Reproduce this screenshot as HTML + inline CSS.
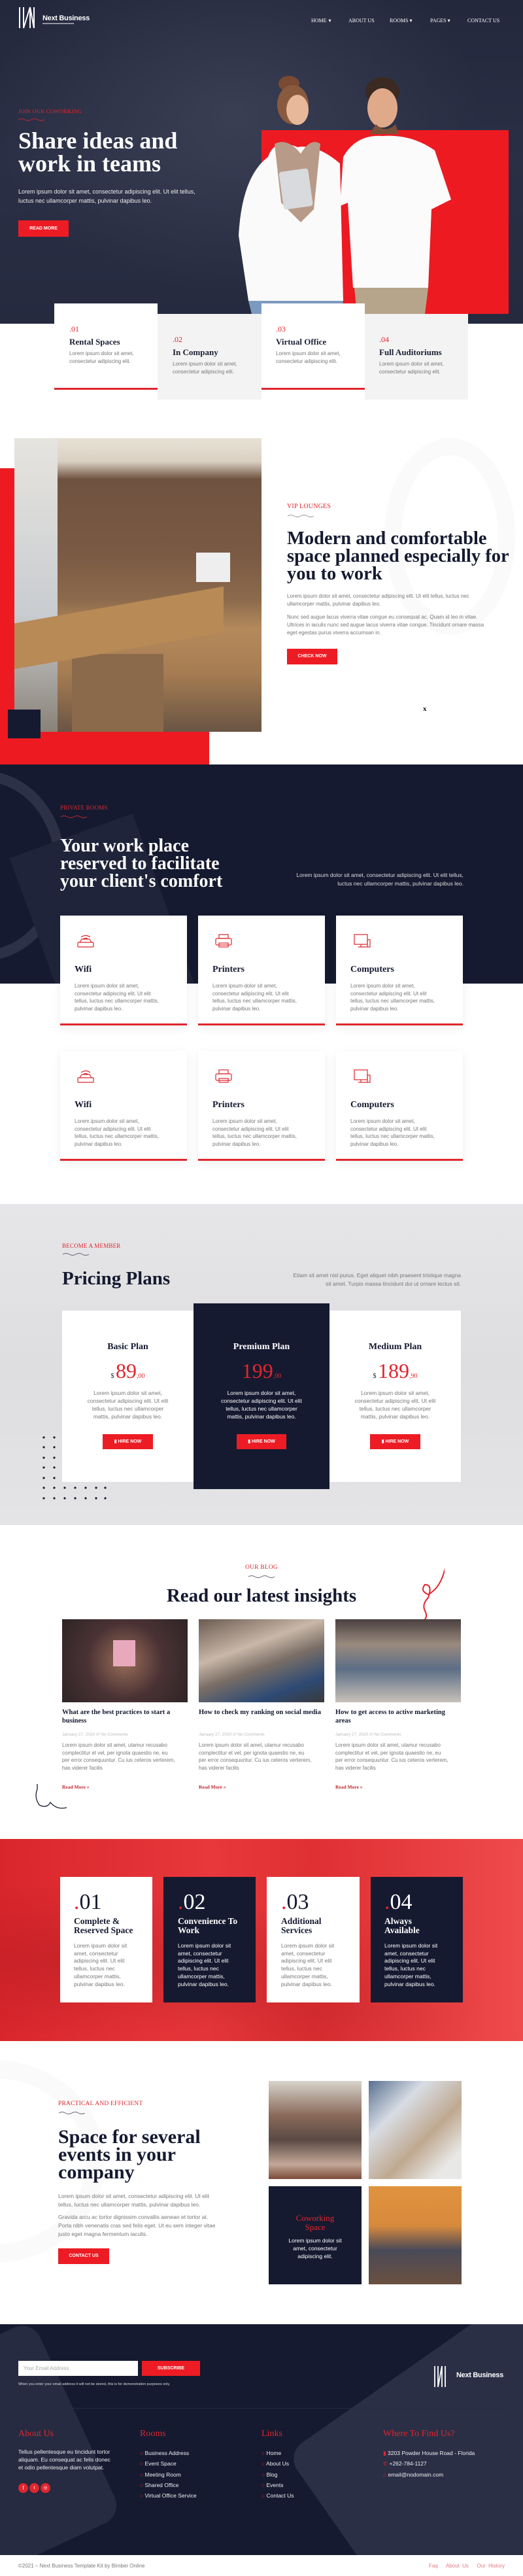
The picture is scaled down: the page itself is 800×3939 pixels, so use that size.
<!DOCTYPE html>
<html><head><meta charset="utf-8"><style>
*{margin:0;padding:0;box-sizing:border-box}
body{width:800px;height:3939px;position:relative;background:#fff;font-family:"Liberation Sans",sans-serif;overflow:hidden}
.a{position:absolute}
.serif{font-family:"Liberation Serif",serif;font-weight:bold}
.tag{font-family:"Liberation Serif",serif;color:#e0262e;font-size:10px;letter-spacing:.2px}
.p{font-size:8.5px;line-height:15px;color:#777}
.btn{background:#ed1c24;color:#fff;font-size:7px;font-weight:bold;text-align:center}
.navy{background:#151a30}
.card{background:#fff;box-shadow:0 4px 14px rgba(0,0,0,.07)}
</style></head><body>

<!-- HERO -->
<div class="a" style="left:0;top:0;width:800px;height:495px;background:linear-gradient(180deg,#23283d 0%,#2a2f45 50%,#252a3f 100%)"></div>
<div class="a" style="left:0;top:0;width:800px;height:495px;background:radial-gradient(ellipse at 45% 35%,rgba(90,95,115,.35),rgba(0,0,0,0) 60%)"></div>
<svg class="a" style="left:28px;top:10px" width="32" height="34" viewBox="0 0 32 34"><g stroke="#fff" stroke-width="2" fill="none"><path d="M2 1V33M8 1V33L18 1V33M24 1V33M18 1L24 33"/></g></svg>
<div class="a" style="left:65px;top:22px;color:#fff;font-size:11px;font-weight:bold;letter-spacing:-.3px">Next Business</div>
<div class="a" style="left:65px;top:35px;width:48px;height:2px;background:rgba(255,255,255,.5)"></div>
<div class="a serif" style="top:27px;left:476px;color:#fff;font-size:8px;font-weight:normal;word-spacing:1px">HOME ▾</div>
<div class="a serif" style="top:27px;left:533px;color:#fff;font-size:8px;font-weight:normal">ABOUT US</div>
<div class="a serif" style="top:27px;left:596px;color:#fff;font-size:8px;font-weight:normal">ROOMS ▾</div>
<div class="a serif" style="top:27px;left:658px;color:#fff;font-size:8px;font-weight:normal">PAGES ▾</div>
<div class="a serif" style="top:27px;left:715px;color:#fff;font-size:8px;font-weight:normal">CONTACT US</div>

<div class="a tag" style="left:28px;top:165px;font-size:8.5px">JOIN OUR COWORKING</div>
<svg class="a" style="left:28px;top:180px" width="40" height="5"><path d="M0 3Q5 0 10 3T20 3T30 3T40 3" stroke="#c0282e" fill="none"/></svg>
<div class="a serif" style="left:28px;top:198px;color:#fff;font-size:36px;line-height:35px">Share ideas and<br>work in teams</div>
<div class="a" style="left:28px;top:286px;color:#eee;font-size:9px;line-height:14px">Lorem ipsum dolor sit amet, consectetur adipiscing elit. Ut elit tellus,<br>luctus nec ullamcorper mattis, pulvinar dapibus leo.</div>
<div class="a btn" style="left:28px;top:337px;width:77px;height:25px;line-height:25px">READ MORE</div>

<div class="a" style="left:400px;top:199px;width:378px;height:281px;background:#ed1a22"></div>
<svg class="a" style="left:360px;top:110px" width="340" height="370" viewBox="0 0 340 370">
<ellipse cx="82" cy="18" rx="16" ry="12" fill="#7a4a32"/>
<ellipse cx="88" cy="50" rx="24" ry="30" fill="#8a5a3e"/>
<ellipse cx="95" cy="58" rx="17" ry="23" fill="#e8b89a"/>
<path d="M50 130Q60 100 95 115Q125 110 160 140L165 350H20L5 250Q10 160 50 130Z" fill="#fafafa"/>
<path d="M60 110Q80 100 100 125Q115 100 130 110L120 210L100 230L70 200Z" fill="#b89a88"/>
<rect x="70" y="150" width="45" height="58" rx="4" fill="#d8dadd" transform="rotate(-8 92 178)"/>
<path d="M20 350H165L160 370H25Z" fill="#7c9ac0"/>
<ellipse cx="225" cy="30" rx="26" ry="22" fill="#3a2a22"/>
<ellipse cx="225" cy="55" rx="23" ry="30" fill="#e0a98a"/>
<path d="M215 80Q230 95 245 80L250 95H205Z" fill="#7a5038"/>
<path d="M165 130Q185 95 225 98Q270 95 305 120L330 195L300 210L295 330H180L172 200L160 205Z" fill="#fbfbfb"/>
<path d="M182 330H295L290 370H186Z" fill="#b7a58b"/>
</svg>

<div class="a" style="left:83px;top:464px;width:158px;height:132px;background:#fff;border-bottom:3px solid #e0262e"></div>
<div class="a" style="left:241px;top:480px;width:159px;height:131px;background:#f3f3f3"></div>
<div class="a" style="left:400px;top:464px;width:158px;height:132px;background:#fff;border-bottom:3px solid #e0262e"></div>
<div class="a" style="left:558px;top:480px;width:158px;height:131px;background:#f3f3f3"></div>
<div class="a serif" style="left:106px;top:496px;color:#e0262e;font-size:12px;font-weight:normal">.01</div>
<div class="a serif" style="left:106px;top:515px;color:#1c2033;font-size:13px">Rental Spaces</div>
<div class="a p" style="left:106px;top:535px;font-size:8px;line-height:12px">Lorem ipsum dolor sit amet,<br>consectetur adipiscing elit.</div>
<div class="a serif" style="left:264px;top:512px;color:#e0262e;font-size:12px;font-weight:normal">.02</div>
<div class="a serif" style="left:264px;top:531px;color:#1c2033;font-size:13px">In Company</div>
<div class="a p" style="left:264px;top:551px;font-size:8px;line-height:12px">Lorem ipsum dolor sit amet,<br>consectetur adipiscing elit.</div>
<div class="a serif" style="left:422px;top:496px;color:#e0262e;font-size:12px;font-weight:normal">.03</div>
<div class="a serif" style="left:422px;top:515px;color:#1c2033;font-size:13px">Virtual Office</div>
<div class="a p" style="left:422px;top:535px;font-size:8px;line-height:12px">Lorem ipsum dolor sit amet,<br>consectetur adipiscing elit.</div>
<div class="a serif" style="left:580px;top:512px;color:#e0262e;font-size:12px;font-weight:normal">.04</div>
<div class="a serif" style="left:580px;top:531px;color:#1c2033;font-size:13px">Full Auditoriums</div>
<div class="a p" style="left:580px;top:551px;font-size:8px;line-height:12px">Lorem ipsum dolor sit amet,<br>consectetur adipiscing elit.</div>

<!-- VIP LOUNGES -->
<div class="a" style="left:0;top:716px;width:22px;height:403px;background:#ed1a22"></div>
<div class="a" style="left:0;top:1119px;width:320px;height:50px;background:#ed1a22"></div>
<div class="a" style="left:22px;top:670px;width:378px;height:449px;background:linear-gradient(180deg,#e8e2d6 0%,#d9d0c2 8%,#6e5240 14%,#7b5a44 40%,#8c6a4c 55%,#b48a5c 65%,#a67c52 80%,#6a5544 100%)"></div>
<div class="a" style="left:22px;top:670px;width:66px;height:449px;background:linear-gradient(180deg,#e6e4df,#c9ccd0 60%,#8a8278)"></div>
<div class="a" style="left:110px;top:1000px;width:140px;height:119px;background:#8a6a4a"></div>
<div class="a" style="left:300px;top:845px;width:52px;height:45px;background:#eee"></div>
<div class="a" style="left:22px;top:925px;width:320px;height:70px;background:#b88a56;transform:skewY(-10deg)"></div>
<div class="a" style="left:12px;top:1085px;width:50px;height:44px;background:#151a30"></div>
<div class="a" style="left:588px;top:670px;width:200px;height:300px;border-radius:50%;border:26px solid #fafafa"></div>
<div class="a tag" style="left:439px;top:769px">VIP LOUNGES</div>
<svg class="a" style="left:440px;top:786px" width="40" height="5"><path d="M0 3Q5 0 10 3T20 3T30 3T40 3" stroke="#999" fill="none"/></svg>
<div class="a serif" style="left:439px;top:810px;color:#151a30;font-size:28.5px;line-height:27px">Modern and comfortable<br>space planned especially for<br>you to work</div>
<div class="a p" style="left:439px;top:906px;font-size:8px;line-height:12px">Lorem ipsum dolor sit amet, consectetur adipiscing elit. Ut elit tellus, luctus nec<br>ullamcorper mattis, pulvinar dapibus leo.</div>
<div class="a p" style="left:439px;top:938px;font-size:8px;line-height:12px">Nunc sed augue lacus viverra vitae congue eu consequat ac. Quam id leo in vitae.<br>Ultrices in iaculis nunc sed augue lacus viverra vitae congue. Tincidunt ornare massa<br>eget egestas purus viverra accumsan in.</div>
<div class="a btn" style="left:439px;top:992px;width:77px;height:24px;line-height:24px">CHECK NOW</div>
<div class="a serif" style="left:647px;top:1078px;font-size:11px;color:#111">x</div>

<!-- PRIVATE ROOMS -->
<div class="a navy" style="left:0;top:1169px;width:800px;height:335px;overflow:hidden"><div class="a" style="left:-150px;top:10px;width:250px;height:290px;border-radius:50%;border:16px solid #2c3147"></div><div class="a" style="left:60px;top:100px;width:200px;height:300px;background:#1f243a;transform:rotate(-20deg)"></div></div>
<div class="a tag" style="left:92px;top:1230px;font-size:9px">PRIVATE ROOMS</div>
<svg class="a" style="left:93px;top:1246px" width="40" height="5"><path d="M0 3Q5 0 10 3T20 3T30 3T40 3" stroke="#c0282e" fill="none"/></svg>
<div class="a serif" style="left:92px;top:1280px;color:#fff;font-size:28px;line-height:27px">Your work place<br>reserved to facilitate<br>your client's comfort</div>
<div class="a" style="left:400px;top:1332px;width:309px;color:#ddd;font-size:8.5px;line-height:13px;text-align:right">Lorem ipsum dolor sit amet, consectetur adipiscing elit. Ut elit tellus,<br>luctus nec ullamcorper mattis, pulvinar dapibus leo.</div>

<div class="a card" style="left:92px;top:1400px;width:194px;height:168px;border-bottom:3px solid #e0262e"></div>
<div class="a card" style="left:303px;top:1400px;width:194px;height:168px;border-bottom:3px solid #e0262e"></div>
<div class="a card" style="left:514px;top:1400px;width:194px;height:168px;border-bottom:3px solid #e0262e"></div>
<div class="a card" style="left:92px;top:1607px;width:194px;height:168px;border-bottom:3px solid #e0262e"></div>
<div class="a card" style="left:303px;top:1607px;width:194px;height:168px;border-bottom:3px solid #e0262e"></div>
<div class="a card" style="left:514px;top:1607px;width:194px;height:168px;border-bottom:3px solid #e0262e"></div>
<svg class="a" style="left:117px;top:1429px" width="28" height="22" viewBox="0 0 28 22"><g stroke="#e0262e" fill="none" stroke-width="1.2"><rect x="2" y="12" width="24" height="7" rx="1"/><path d="M5 12L8 7H20L23 12M7 4Q14 -1 21 4M10 7Q14 4 18 7"/></g></svg>
<svg class="a" style="left:328px;top:1427px" width="28" height="24" viewBox="0 0 28 24"><g stroke="#e0262e" fill="none" stroke-width="1.2"><rect x="2" y="8" width="24" height="10" rx="2"/><rect x="7" y="2" width="14" height="6"/><rect x="7" y="15" width="14" height="6"/></g></svg>
<svg class="a" style="left:540px;top:1427px" width="28" height="24" viewBox="0 0 28 24"><g stroke="#e0262e" fill="none" stroke-width="1.2"><rect x="2" y="2" width="20" height="15"/><path d="M8 21H22M12 17V21"/><rect x="22" y="10" width="4" height="11"/></g></svg>
<svg class="a" style="left:117px;top:1636px" width="28" height="22" viewBox="0 0 28 22"><g stroke="#e0262e" fill="none" stroke-width="1.2"><rect x="2" y="12" width="24" height="7" rx="1"/><path d="M5 12L8 7H20L23 12M7 4Q14 -1 21 4M10 7Q14 4 18 7"/></g></svg>
<svg class="a" style="left:328px;top:1634px" width="28" height="24" viewBox="0 0 28 24"><g stroke="#e0262e" fill="none" stroke-width="1.2"><rect x="2" y="8" width="24" height="10" rx="2"/><rect x="7" y="2" width="14" height="6"/><rect x="7" y="15" width="14" height="6"/></g></svg>
<svg class="a" style="left:540px;top:1634px" width="28" height="24" viewBox="0 0 28 24"><g stroke="#e0262e" fill="none" stroke-width="1.2"><rect x="2" y="2" width="20" height="15"/><path d="M8 21H22M12 17V21"/><rect x="22" y="10" width="4" height="11"/></g></svg>
<div class="a serif" style="left:114px;top:1475px;font-size:14px;color:#151a30">Wifi</div>
<div class="a serif" style="left:325px;top:1475px;font-size:14px;color:#151a30">Printers</div>
<div class="a serif" style="left:536px;top:1475px;font-size:14px;color:#151a30">Computers</div>
<div class="a serif" style="left:114px;top:1682px;font-size:14px;color:#151a30">Wifi</div>
<div class="a serif" style="left:325px;top:1682px;font-size:14px;color:#151a30">Printers</div>
<div class="a serif" style="left:536px;top:1682px;font-size:14px;color:#151a30">Computers</div>
<div class="a p" style="left:114px;top:1502px;font-size:8px;line-height:11.5px">Lorem ipsum dolor sit amet,<br>consectetur adipiscing elit. Ut elit<br>tellus, luctus nec ullamcorper mattis,<br>pulvinar dapibus leo.</div>
<div class="a p" style="left:325px;top:1502px;font-size:8px;line-height:11.5px">Lorem ipsum dolor sit amet,<br>consectetur adipiscing elit. Ut elit<br>tellus, luctus nec ullamcorper mattis,<br>pulvinar dapibus leo.</div>
<div class="a p" style="left:536px;top:1502px;font-size:8px;line-height:11.5px">Lorem ipsum dolor sit amet,<br>consectetur adipiscing elit. Ut elit<br>tellus, luctus nec ullamcorper mattis,<br>pulvinar dapibus leo.</div>
<div class="a p" style="left:114px;top:1709px;font-size:8px;line-height:11.5px">Lorem ipsum dolor sit amet,<br>consectetur adipiscing elit. Ut elit<br>tellus, luctus nec ullamcorper mattis,<br>pulvinar dapibus leo.</div>
<div class="a p" style="left:325px;top:1709px;font-size:8px;line-height:11.5px">Lorem ipsum dolor sit amet,<br>consectetur adipiscing elit. Ut elit<br>tellus, luctus nec ullamcorper mattis,<br>pulvinar dapibus leo.</div>
<div class="a p" style="left:536px;top:1709px;font-size:8px;line-height:11.5px">Lorem ipsum dolor sit amet,<br>consectetur adipiscing elit. Ut elit<br>tellus, luctus nec ullamcorper mattis,<br>pulvinar dapibus leo.</div>

<!-- PRICING -->
<div class="a" style="left:0;top:1841px;width:800px;height:491px;background:linear-gradient(180deg,#e6e6e8,#dedee0 50%,#e4e4e6)"></div>
<div class="a tag" style="left:95px;top:1900px;font-size:9px">BECOME A MEMBER</div>
<svg class="a" style="left:96px;top:1915px" width="40" height="5"><path d="M0 3Q5 0 10 3T20 3T30 3T40 3" stroke="#667" fill="none"/></svg>
<div class="a serif" style="left:95px;top:1939px;font-size:29px;color:#151a30">Pricing Plans</div>
<div class="a" style="left:400px;top:1944px;width:305px;color:#777;font-size:8.5px;line-height:13px;text-align:right">Etiam sit amet nisl purus. Eget aliquet nibh praesent tristique magna<br>sit amet. Turpis massa tincidunt dui ut ornare lectus sit.</div>
<svg class="a" style="left:64px;top:2195px" width="100" height="98"><g fill="#151a30"><circle cx="3" cy="3" r="1.6"/><circle cx="19" cy="3" r="1.6"/><circle cx="3" cy="18" r="1.6"/><circle cx="19" cy="18" r="1.6"/><circle cx="3" cy="34" r="1.6"/><circle cx="19" cy="34" r="1.6"/><circle cx="3" cy="49" r="1.6"/><circle cx="19" cy="49" r="1.6"/><circle cx="3" cy="65" r="1.6"/><circle cx="19" cy="65" r="1.6"/><circle cx="3" cy="80" r="1.6"/><circle cx="19" cy="80" r="1.6"/><circle cx="35" cy="80" r="1.6"/><circle cx="51" cy="80" r="1.6"/><circle cx="67" cy="80" r="1.6"/><circle cx="83" cy="80" r="1.6"/><circle cx="97" cy="80" r="1.6"/><circle cx="3" cy="96" r="1.6"/><circle cx="19" cy="96" r="1.6"/><circle cx="35" cy="96" r="1.6"/><circle cx="51" cy="96" r="1.6"/><circle cx="67" cy="96" r="1.6"/><circle cx="83" cy="96" r="1.6"/><circle cx="97" cy="96" r="1.6"/></g></svg>
<div class="a" style="left:95px;top:2004px;width:201px;height:262px;background:#fff"></div>
<div class="a navy" style="left:296px;top:1993px;width:208px;height:284px"></div>
<div class="a" style="left:504px;top:2004px;width:201px;height:262px;background:#fff"></div>
<div class="a serif" style="left:95px;top:2052px;width:201px;text-align:center;font-size:14px;color:#151a30">Basic Plan</div>
<div class="a serif" style="left:296px;top:2052px;width:208px;text-align:center;font-size:14px;color:#fff">Premium Plan</div>
<div class="a serif" style="left:504px;top:2052px;width:201px;text-align:center;font-size:14px;color:#151a30">Medium Plan</div>
<div class="a serif" style="left:95px;top:2078px;width:201px;text-align:center;color:#e0262e;font-size:32px;font-weight:normal"><span style="font-size:10px;color:#151a30">$ </span>89<span style="font-size:10px">,00</span></div>
<div class="a serif" style="left:296px;top:2078px;width:208px;text-align:center;color:#e0262e;font-size:32px;font-weight:normal">199<span style="font-size:10px">,00</span></div>
<div class="a serif" style="left:504px;top:2078px;width:201px;text-align:center;color:#e0262e;font-size:32px;font-weight:normal"><span style="font-size:10px;color:#151a30">$ </span>189<span style="font-size:10px">,90</span></div>
<div class="a p" style="left:95px;top:2124px;width:201px;text-align:center;font-size:8.5px;line-height:12px">Lorem ipsum dolor sit amet,<br>consectetur adipiscing elit. Ut elit<br>tellus, luctus nec ullamcorper<br>mattis, pulvinar dapibus leo.</div>
<div class="a p" style="left:296px;top:2124px;width:208px;text-align:center;font-size:8.5px;line-height:12px;color:#fff">Lorem ipsum dolor sit amet,<br>consectetur adipiscing elit. Ut elit<br>tellus, luctus nec ullamcorper<br>mattis, pulvinar dapibus leo.</div>
<div class="a p" style="left:504px;top:2124px;width:201px;text-align:center;font-size:8.5px;line-height:12px">Lorem ipsum dolor sit amet,<br>consectetur adipiscing elit. Ut elit<br>tellus, luctus nec ullamcorper<br>mattis, pulvinar dapibus leo.</div>
<div class="a btn" style="left:157px;top:2193px;width:77px;height:23px;line-height:23px">▮ HIRE NOW</div>
<div class="a btn" style="left:362px;top:2193px;width:76px;height:23px;line-height:23px">▮ HIRE NOW</div>
<div class="a btn" style="left:566px;top:2193px;width:77px;height:23px;line-height:23px">▮ HIRE NOW</div>

<!-- BLOG -->
<div class="a tag" style="left:0;width:800px;text-align:center;top:2392px;font-size:9.5px">OUR BLOG</div>
<svg class="a" style="left:380px;top:2408px" width="40" height="5"><path d="M0 3Q5 0 10 3T20 3T30 3T40 3" stroke="#667" fill="none"/></svg>
<div class="a serif" style="left:0;width:800px;text-align:center;top:2424px;font-size:29px;color:#151a30">Read our latest insights</div>
<svg class="a" style="left:630px;top:2393px" width="50" height="85"><path d="M52 0Q45 35 25 45Q12 40 20 30Q32 30 25 50Q15 60 20 70Q25 80 18 85" stroke="#e0262e" stroke-width="2" fill="none"/></svg>
<svg class="a" style="left:52px;top:2728px" width="55" height="40"><path d="M5 0V8Q0 20 8 32Q20 38 25 28Q35 40 50 36" stroke="#151a30" stroke-width="1.3" fill="none"/></svg>
<div class="a" style="left:95px;top:2476px;width:192px;height:127px;background:radial-gradient(circle at 50% 50%,#9a6e5a,#4a3234 50%,#2e2426)"></div>
<div class="a" style="left:173px;top:2508px;width:34px;height:40px;background:#e9a9bd"></div>
<div class="a" style="left:304px;top:2476px;width:192px;height:127px;background:linear-gradient(160deg,#6b5a50,#c9b8a8 35%,#7a6e66 55%,#2d4a74 80%,#3a3a3a)"></div>
<div class="a" style="left:513px;top:2476px;width:192px;height:127px;background:linear-gradient(180deg,#4a4040,#9a8a7e 30%,#5c6e86 60%,#c8c0b8 100%)"></div>
<div class="a serif" style="left:95px;top:2612px;width:192px;font-size:10.5px;line-height:13px;color:#151a30">What are the best practices to start a business</div>
<div class="a serif" style="left:304px;top:2612px;width:192px;font-size:10.5px;line-height:13px;color:#151a30">How to check my ranking on social media</div>
<div class="a serif" style="left:513px;top:2612px;width:192px;font-size:10.5px;line-height:13px;color:#151a30">How to get access to active marketing areas</div>
<div class="a" style="left:95px;top:2649px;font-size:6.5px;color:#bbb">January 27, 2020 /// No Comments</div>
<div class="a" style="left:304px;top:2649px;font-size:6.5px;color:#bbb">January 27, 2020 /// No Comments</div>
<div class="a" style="left:513px;top:2649px;font-size:6.5px;color:#bbb">January 27, 2020 /// No Comments</div>
<div class="a p" style="left:95px;top:2663px;font-size:8px;line-height:11.5px">Lorem ipsum dolor sit amet, utamur recusabo<br>complectitur et vel, per ignota quaestio ne, eu<br>per error consequuntur. Cu ius ceteros verterem,<br>has viderer facilis</div>
<div class="a p" style="left:304px;top:2663px;font-size:8px;line-height:11.5px">Lorem ipsum dolor sit amet, utamur recusabo<br>complectitur et vel, per ignota quaestio ne, eu<br>per error consequuntur. Cu ius ceteros verterem,<br>has viderer facilis</div>
<div class="a p" style="left:513px;top:2663px;font-size:8px;line-height:11.5px">Lorem ipsum dolor sit amet, utamur recusabo<br>complectitur et vel, per ignota quaestio ne, eu<br>per error consequuntur. Cu ius ceteros verterem,<br>has viderer facilis</div>
<div class="a serif" style="left:95px;top:2728px;font-size:7.5px;color:#c0282e">Read More »</div>
<div class="a serif" style="left:304px;top:2728px;font-size:7.5px;color:#c0282e">Read More »</div>
<div class="a serif" style="left:513px;top:2728px;font-size:7.5px;color:#c0282e">Read More »</div>

<!-- RED FEATURES -->
<div class="a" style="left:0;top:2812px;width:800px;height:309px;background:linear-gradient(90deg,#d9262c,#e8383c 40%,#df3034 60%,#ef4a4c)"></div>
<div class="a" style="left:0;top:2812px;width:800px;height:309px;background:radial-gradient(ellipse at 15% 60%,rgba(160,20,25,.35),rgba(0,0,0,0) 45%),radial-gradient(ellipse at 60% 80%,rgba(170,25,30,.3),rgba(0,0,0,0) 40%)"></div>
<div class="a" style="left:92px;top:2870px;width:141px;height:192px;background:#fff"></div>
<div class="a navy" style="left:250px;top:2870px;width:141px;height:192px"></div>
<div class="a" style="left:408px;top:2870px;width:142px;height:192px;background:#fff"></div>
<div class="a navy" style="left:567px;top:2870px;width:141px;height:192px"></div>
<div class="a serif" style="left:113px;top:2890px;font-size:34px;font-weight:normal;color:#151a30"><span style="color:#e0262e">.</span>01</div>
<div class="a serif" style="left:272px;top:2890px;font-size:34px;font-weight:normal;color:#fff"><span style="color:#e0262e">.</span>02</div>
<div class="a serif" style="left:430px;top:2890px;font-size:34px;font-weight:normal;color:#151a30"><span style="color:#e0262e">.</span>03</div>
<div class="a serif" style="left:588px;top:2890px;font-size:34px;font-weight:normal;color:#fff"><span style="color:#e0262e">.</span>04</div>
<div class="a serif" style="left:113px;top:2931px;font-size:13.5px;line-height:14px;color:#151a30">Complete &amp;<br>Reserved Space</div>
<div class="a serif" style="left:272px;top:2931px;font-size:13.5px;line-height:14px;color:#fff">Convenience To<br>Work</div>
<div class="a serif" style="left:430px;top:2931px;font-size:13.5px;line-height:14px;color:#151a30">Additional<br>Services</div>
<div class="a serif" style="left:588px;top:2931px;font-size:13.5px;line-height:14px;color:#fff">Always<br>Available</div>
<div class="a p" style="left:113px;top:2970px;font-size:8.5px;line-height:11.7px">Lorem ipsum dolor sit<br>amet, consectetur<br>adipiscing elit. Ut elit<br>tellus, luctus nec<br>ullamcorper mattis,<br>pulvinar dapibus leo.</div>
<div class="a p" style="left:272px;top:2970px;font-size:8.5px;line-height:11.7px;color:#fff">Lorem ipsum dolor sit<br>amet, consectetur<br>adipiscing elit. Ut elit<br>tellus, luctus nec<br>ullamcorper mattis,<br>pulvinar dapibus leo.</div>
<div class="a p" style="left:430px;top:2970px;font-size:8.5px;line-height:11.7px">Lorem ipsum dolor sit<br>amet, consectetur<br>adipiscing elit. Ut elit<br>tellus, luctus nec<br>ullamcorper mattis,<br>pulvinar dapibus leo.</div>
<div class="a p" style="left:588px;top:2970px;font-size:8.5px;line-height:11.7px;color:#fff">Lorem ipsum dolor sit<br>amet, consectetur<br>adipiscing elit. Ut elit<br>tellus, luctus nec<br>ullamcorper mattis,<br>pulvinar dapibus leo.</div>

<!-- EVENTS -->
<div class="a" style="left:-180px;top:3150px;width:340px;height:310px;border-radius:50%;border:28px solid #fafafa"></div>
<div class="a tag" style="left:89px;top:3212px;font-size:9.5px">PRACTICAL AND EFFICIENT</div>
<svg class="a" style="left:90px;top:3228px" width="40" height="5"><path d="M0 3Q5 0 10 3T20 3T30 3T40 3" stroke="#667" fill="none"/></svg>
<div class="a serif" style="left:89px;top:3254px;font-size:30px;line-height:27px;color:#151a30">Space for several<br>events in your<br>company</div>
<div class="a p" style="left:89px;top:3352px;font-size:8.5px;line-height:13px">Lorem ipsum dolor sit amet, consectetur adipiscing elit. Ut elit<br>tellus, luctus nec ullamcorper mattis, pulvinar dapibus leo.</div>
<div class="a p" style="left:89px;top:3384px;font-size:8.5px;line-height:13px">Gravida arcu ac tortor dignissim convallis aenean et tortor at.<br>Porta nibh venenatis cras sed felis eget. Ut eu sem integer vitae<br>justo eget magna fermentum iaculis.</div>
<div class="a btn" style="left:89px;top:3438px;width:78px;height:24px;line-height:24px">CONTACT US</div>
<div class="a" style="left:411px;top:3182px;width:142px;height:150px;background:linear-gradient(180deg,#d8d4cc,#8a6a5a 35%,#5a4a44 60%,#c4a898 85%,#7a4a3a)"></div>
<div class="a" style="left:564px;top:3182px;width:142px;height:150px;background:linear-gradient(135deg,#5a7090,#d8dde4 30%,#bfa890 60%,#e8e8e6 85%)"></div>
<div class="a navy" style="left:411px;top:3343px;width:142px;height:150px"></div>
<div class="a serif" style="left:411px;top:3385px;width:142px;text-align:center;font-size:13px;line-height:14px;color:#e0262e;font-weight:normal">Coworking<br>Space</div>
<div class="a" style="left:411px;top:3420px;width:142px;text-align:center;font-size:8.5px;line-height:12px;color:#fff">Lorem ipsum dolor sit<br>amet, consectetur<br>adipiscing elit.</div>
<div class="a" style="left:564px;top:3343px;width:142px;height:150px;background:linear-gradient(180deg,#e0933e,#d88a3c 40%,#4a4a58 65%,#6a5040)"></div>

<!-- FOOTER -->
<div class="a navy" style="left:0;top:3554px;width:800px;height:353px;overflow:hidden">
<div class="a" style="left:-120px;top:30px;width:250px;height:330px;background:#262b42;border-radius:30px;transform:rotate(-25deg)"></div>
<div class="a" style="left:520px;top:40px;width:420px;height:420px;background:#2a2f46;border-radius:30px;transform:rotate(-35deg)"></div>
</div>
<div class="a" style="left:28px;top:3610px;width:183px;height:23px;background:#fff;color:#aaa;font-size:8px;line-height:23px;padding-left:8px">Your Email Address</div>
<div class="a btn" style="left:217px;top:3610px;width:89px;height:23px;line-height:23px">SUBSCRIBE</div>
<div class="a" style="left:28px;top:3643px;color:#ddd;font-size:5.5px">When you enter your email address it will not be stored, this is for demonstration purposes only.</div>
<svg class="a" style="left:663px;top:3617px" width="20" height="34" viewBox="0 0 20 34"><g stroke="#fff" stroke-width="1.8" fill="none"><path d="M2 1V33M7 1V33L13 1V33M18 1V33"/></g></svg>
<div class="a" style="left:698px;top:3626px;color:#fff;font-size:11px;font-weight:bold;letter-spacing:-.3px">Next Business</div>
<div class="a" style="left:28px;top:3682px;width:744px;height:1px;background:#262b40"></div>
<div class="a serif" style="left:28px;top:3714px;color:#e0262e;font-size:14px;font-weight:normal">About Us</div>
<div class="a serif" style="left:214px;top:3714px;color:#e0262e;font-size:14px;font-weight:normal">Rooms</div>
<div class="a serif" style="left:400px;top:3714px;color:#e0262e;font-size:14px;font-weight:normal">Links</div>
<div class="a serif" style="left:586px;top:3714px;color:#e0262e;font-size:14px;font-weight:normal">Where To Find Us?</div>
<div class="a" style="left:28px;top:3743px;color:#eee;font-size:8.5px;line-height:12px">Tellus pellentesque eu tincidunt tortor<br>aliquam. Eu consequat ac felis donec<br>et odio pellentesque diam volutpat.</div>
<div class="a" style="left:28px;top:3797px;width:15px;height:15px;border-radius:50%;background:#e0262e;color:#fff;font-size:8px;text-align:center;line-height:15px">f</div>
<div class="a" style="left:45px;top:3797px;width:15px;height:15px;border-radius:50%;background:#e0262e;color:#fff;font-size:7px;text-align:center;line-height:15px">t</div>
<div class="a" style="left:62px;top:3797px;width:15px;height:15px;border-radius:50%;background:#e0262e;color:#fff;font-size:7px;text-align:center;line-height:15px">◎</div>
<div class="a" style="left:214px;top:3743px;color:#eee;font-size:8.5px;line-height:16.3px"><span style="color:#e0262e">○</span> Business Address<br><span style="color:#e0262e">○</span> Event Space<br><span style="color:#e0262e">○</span> Meeting Room<br><span style="color:#e0262e">○</span> Shared Office<br><span style="color:#e0262e">○</span> Virtual Office Service</div>
<div class="a" style="left:400px;top:3743px;color:#eee;font-size:8.5px;line-height:16.3px"><span style="color:#e0262e">○</span> Home<br><span style="color:#e0262e">○</span> About Us<br><span style="color:#e0262e">○</span> Blog<br><span style="color:#e0262e">○</span> Events<br><span style="color:#e0262e">○</span> Contact Us</div>
<div class="a" style="left:586px;top:3743px;color:#eee;font-size:8.5px;line-height:16.3px"><span style="color:#e0262e">▮</span> 3203 Powder House Road - Florida<br><span style="color:#e0262e">✆</span> +262-784-1127<br><span style="color:#e0262e">⌂</span> email@nodomain.com</div>
<div class="a" style="left:28px;top:3919px;color:#777;font-size:8px">©2021 – Next Business Template Kit by Bimber Online</div>
<div class="a" style="left:600px;top:3919px;width:172px;text-align:right;color:#e07a80;font-size:8px;word-spacing:2px">Faq &nbsp; About Us &nbsp; Our History</div>
</body></html>
